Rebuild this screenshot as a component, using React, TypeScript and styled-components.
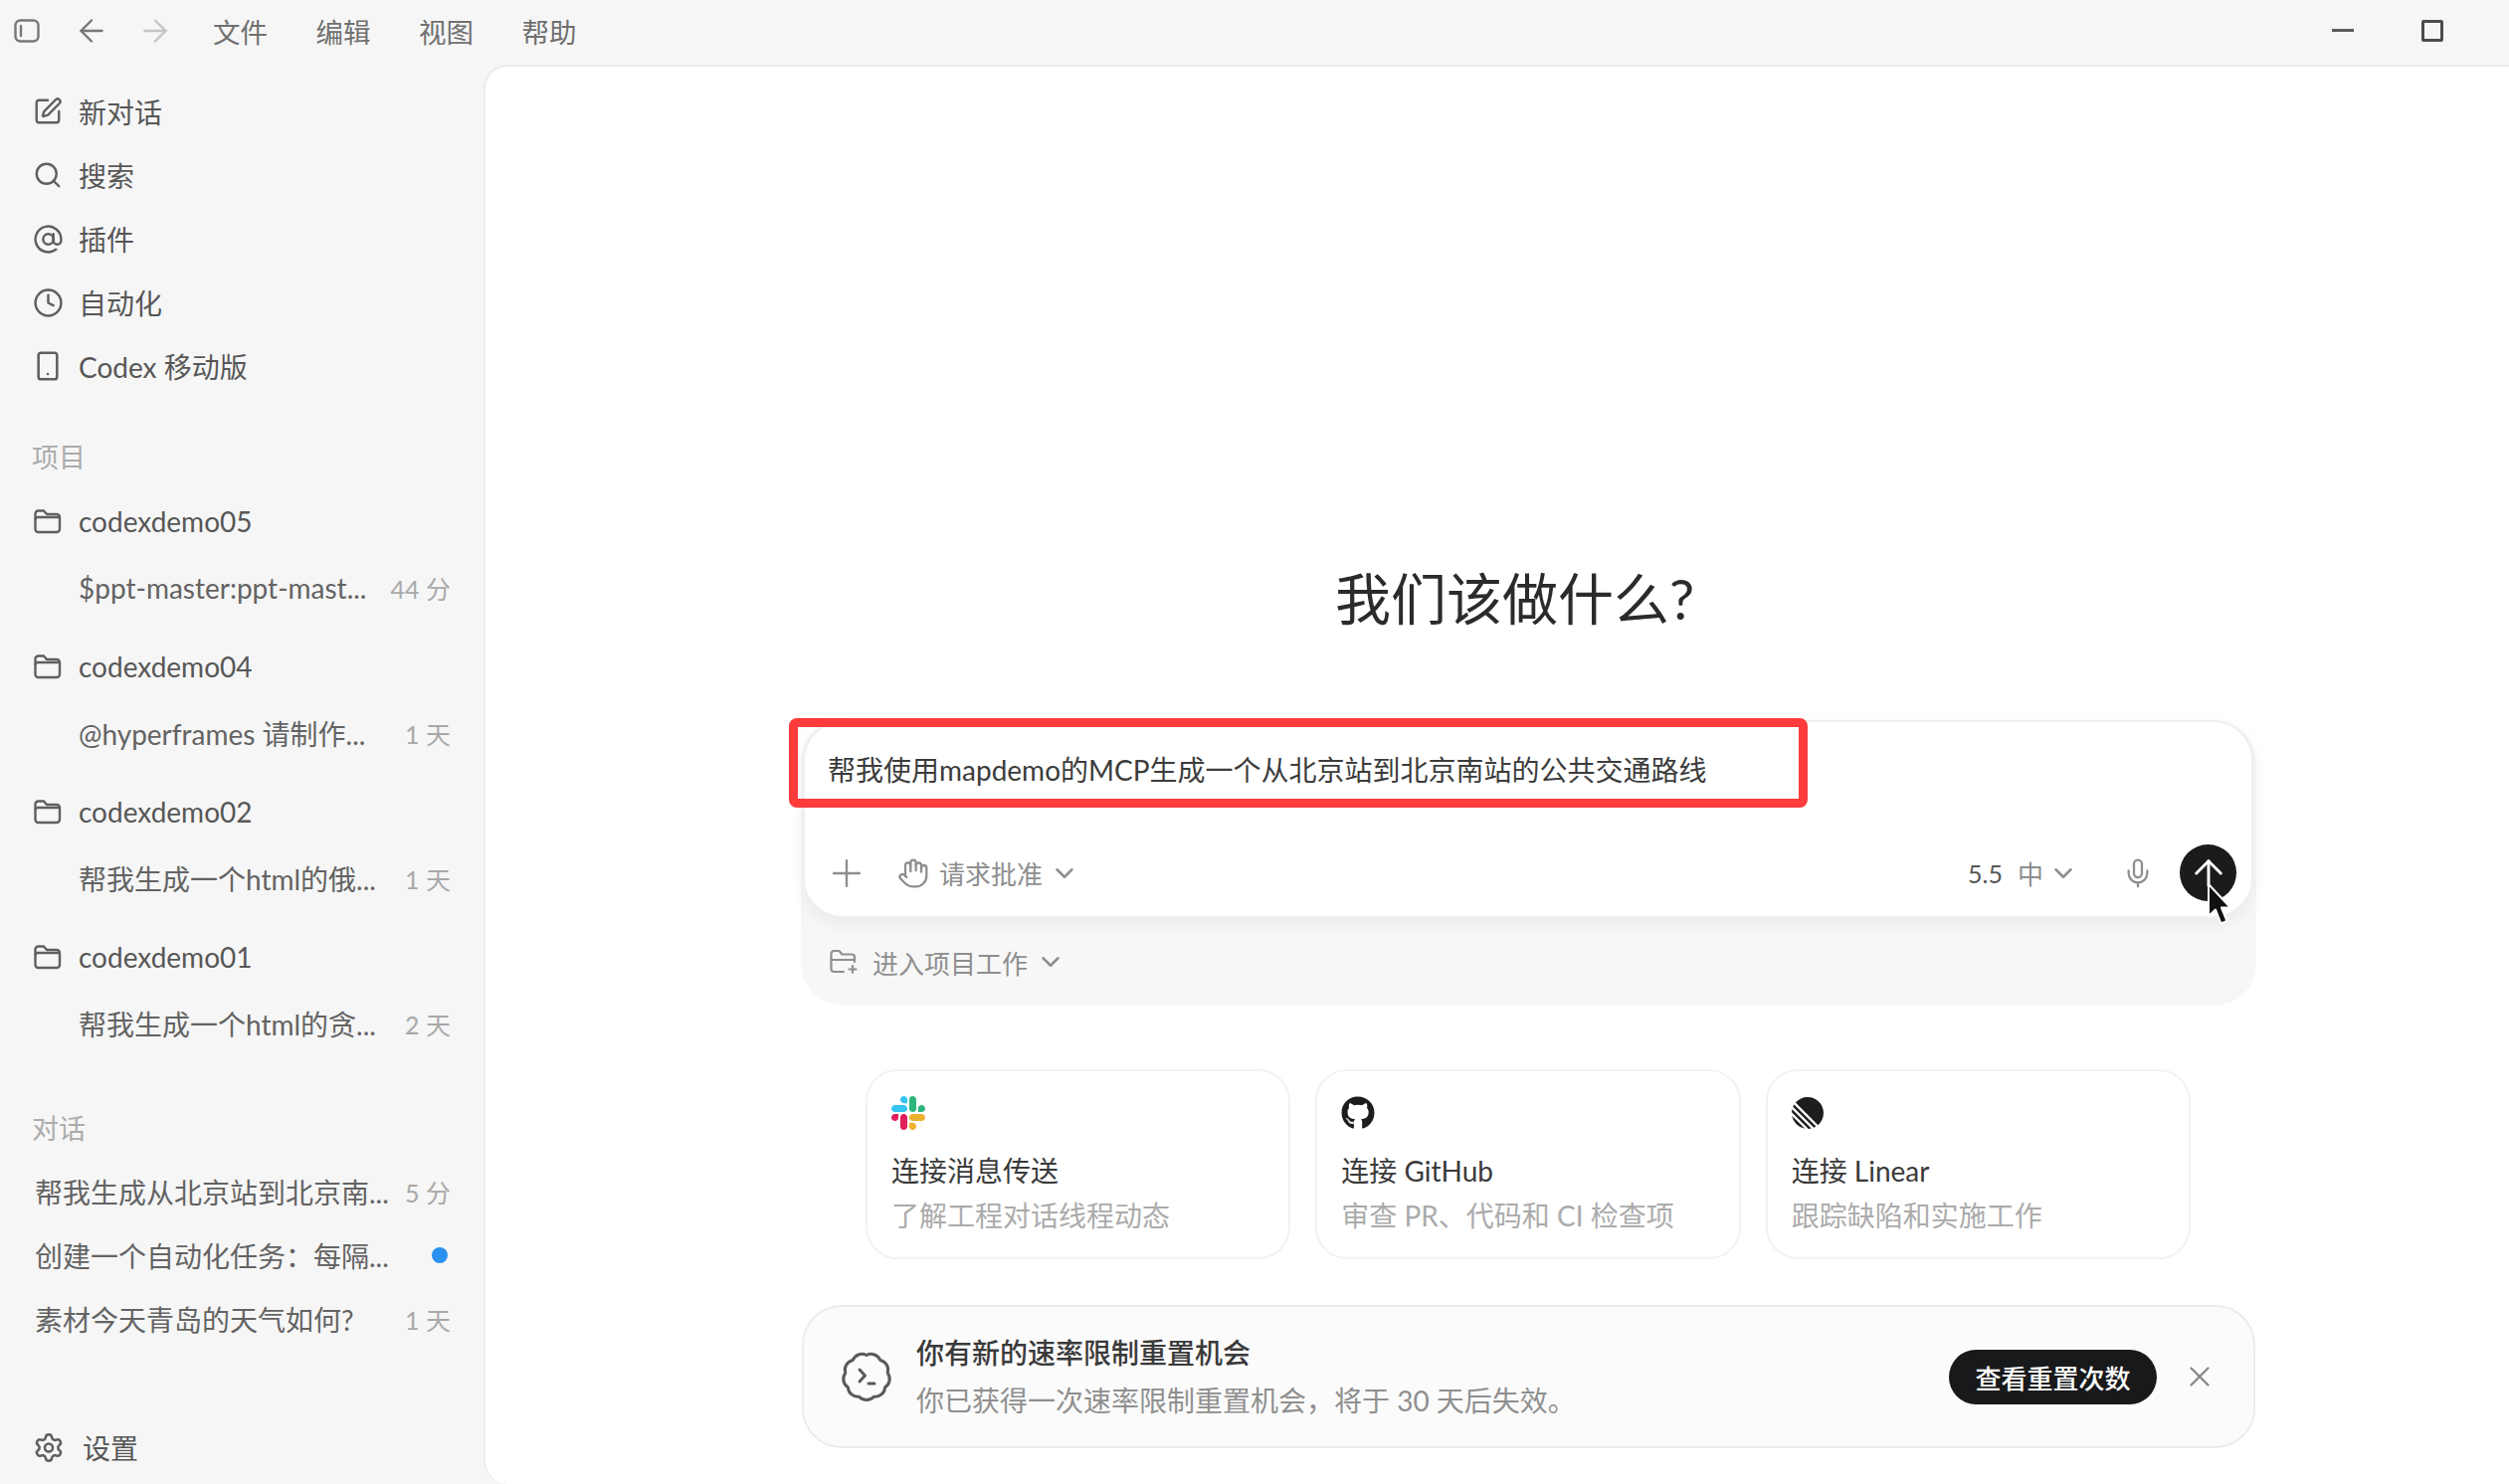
import React, { FC } from 'react';
import styled, { createGlobalStyle } from 'styled-components';
import {
	ArrowLeft,
	ArrowRight,
	ArrowUp,
	AtSign,
	ChevronDown,
	Clock,
	Hand,
	Mic,
	Plus,
	Search,
	Settings,
	Smartphone,
	SquarePen,
	X,
} from 'lucide-react';
import { FaGithub } from 'react-icons/fa';
import { SiLinear } from 'react-icons/si';

const GlobalStyle = createGlobalStyle`
	html, body {
		margin: 0;
		padding: 0;
		height: 100%;
		overflow: hidden;
		background: #f6f6f6;
	}
	body {
		font-family: Lato, "Noto Sans CJK SC", sans-serif;
		color: #555;
	}
`;

const Page = styled.div`
	display: flex;
	flex-direction: column;
	height: 100vh;
`;

const TitleBar = styled.header`
	align-items: center;
	box-sizing: border-box;
	display: flex;
	flex: none;
	height: 65px;
	padding: 0 66px 4px 13px;
`;

const BarIcon = styled.span<{ $faded?: boolean; $gap?: number }>`
	color: ${({ $faded }) => ($faded ? '#c4c4c4' : '#777')};
	display: flex;
	margin-left: ${({ $gap }) => $gap ?? 0}px;
`;

const Menu = styled.nav`
	display: flex;
	font-size: 27.5px;
	gap: 48.5px;
	color: #707070;
	margin-left: 40px;
`;

const WindowControls = styled.div`
	align-items: center;
	display: flex;
	gap: 68px;
	margin-left: auto;
`;

const Minimize = styled.span`
	background: #5c5c5c;
	height: 3px;
	width: 22px;
`;

const Maximize = styled.span`
	border: 3px solid #4c4c4c;
	border-radius: 2px;
	box-sizing: border-box;
	height: 22px;
	width: 22px;
`;

const Body = styled.div`
	display: flex;
	flex: 1;
	min-height: 0;
`;

const Sidebar = styled.aside`
	display: flex;
	flex: none;
	flex-direction: column;
	padding: 15px 0 5px;
	width: 486px;
	box-sizing: border-box;
`;

const NavRow = styled.div`
	align-items: center;
	display: flex;
	font-size: 28px;
	gap: 15px;
	height: 64px;
	padding-left: 32px;
	color: #575757;
`;

const NavIcon = styled.span`
	color: #5f5f5f;
	display: flex;
	justify-content: center;
	width: 32px;
`;

const SectionLabel = styled.div<{ $top: number; $bottom: number }>`
	color: #ababab;
	font-size: 27px;
	line-height: 46px;
	margin: ${({ $top, $bottom }) => `${$top}px 0 ${$bottom}px`};
	padding-left: 32px;
`;

const ProjectGroup = styled.div`
	margin-bottom: 12px;
`;

const FolderRow = styled(NavRow)`
	height: 67px;
`;

const ThreadRow = styled.div<{ $indent: number; $height: number }>`
	align-items: center;
	box-sizing: border-box;
	color: #636363;
	display: flex;
	font-size: 28px;
	height: ${({ $height }) => $height}px;
	justify-content: space-between;
	padding: 0 33px 0 ${({ $indent }) => $indent}px;
	white-space: nowrap;
`;

const TimeLabel = styled.span`
	color: #a8a8a8;
	font-size: 25px;
`;

const UnreadDot = styled.span`
	background: #2b90f0;
	border-radius: 50%;
	height: 16px;
	margin-right: 3px;
	width: 16px;
`;

const SettingsRow = styled(NavRow)`
	gap: 18px;
	margin-top: auto;
	padding-left: 33px;
`;

const Main = styled.main`
	background: #fff;
	border-left: 2px solid #ececec;
	border-top: 2px solid #ececec;
	border-radius: 24px 0 0 24px;
	box-sizing: border-box;
	flex: 1;
	min-width: 0;
	padding: 495px 0 0 317px;
`;

const Column = styled.div`
	width: 1463px;
`;

const Heading = styled.h1`
	color: #2b2b2b;
	font-size: 56px;
	font-weight: 400;
	line-height: 80px;
	margin: 0;
	padding-right: 28px;
	text-align: center;
`;

const Composer = styled.section`
	background: #f7f7f7;
	border-radius: 42px;
	margin-top: 82px;
	padding: 0 3px 0 2px;
`;

const InputCard = styled.div`
	background: #fff;
	border: 2px solid #efefef;
	border-radius: 40px;
	box-shadow: 0 6px 18px rgba(0, 0, 0, 0.06);
	box-sizing: border-box;
	display: flex;
	flex-direction: column;
	height: 199px;
	justify-content: space-between;
	padding: 28px 15px 15px 23px;
	position: relative;
`;

const Highlight = styled.div`
	border: 9px solid #ff3b3b;
	border-radius: 8px;
	box-sizing: border-box;
	height: 90px;
	left: -16px;
	position: absolute;
	top: -4px;
	width: 1024px;
`;

const PromptText = styled.div`
	color: #3c3c3c;
	font-size: 28px;
	line-height: 40px;
	position: relative;
`;

const Toolbar = styled.div`
	align-items: center;
	display: flex;
	height: 57px;
	color: #8e8e8e;
	font-size: 26px;
`;

const ToolIcon = styled.span<{ $left?: number; $right?: number }>`
	display: flex;
	margin-left: ${({ $left }) => $left ?? 0}px;
	margin-right: ${({ $right }) => $right ?? 0}px;
`;

const RightTools = styled.div`
	align-items: center;
	display: flex;
	margin-left: auto;
`;

const ModelName = styled.span`
	color: #555;
	font-size: 25px;
	margin-right: 15px;
`;

const SendButton = styled.button`
	align-items: center;
	background: #1a1b1d;
	border: 0;
	border-radius: 50%;
	color: #fff;
	display: flex;
	height: 57px;
	justify-content: center;
	margin-left: 26px;
	padding: 0;
	position: relative;
	width: 57px;
`;

const Cursor = styled.svg`
	left: 27px;
	position: absolute;
	top: 38px;
`;

const ComposerFooter = styled.div`
	align-items: center;
	color: #8e8e8e;
	display: flex;
	font-size: 26px;
	height: 88px;
	padding-left: 26px;
`;

const ConnectGrid = styled.div`
	display: grid;
	gap: 25px;
	grid-template-columns: repeat(3, 1fr);
	margin: 64px 66px 0 65px;
`;

const ConnectCard = styled.div`
	background: #fff;
	border: 2px solid #f3f3f3;
	border-radius: 32px;
	box-sizing: border-box;
	height: 191px;
	padding: 25px 24px;
`;

const CardIcon = styled.div`
	align-items: center;
	color: #1d1d1f;
	display: flex;
	height: 34px;
`;

const CardTitle = styled.div`
	color: #3a3a3a;
	font-size: 28px;
	line-height: 40px;
	margin-top: 21px;
`;

const CardSub = styled.div`
	color: #ababab;
	font-size: 28px;
	line-height: 40px;
	margin-top: 5px;
`;

const Banner = styled.section`
	align-items: center;
	background: #fbfbfb;
	border: 2px solid #ececec;
	border-radius: 40px;
	box-sizing: border-box;
	display: flex;
	height: 144px;
	margin: 46px 1px 0 1px;
	padding: 0 37px 0 37px;
`;

const BannerText = styled.div`
	margin-left: 24px;
`;

const BannerTitle = styled.div`
	color: #3a3a3a;
	font-size: 28px;
	font-weight: 500;
	line-height: 44px;
`;

const BannerSub = styled.div`
	color: #8f8f8f;
	font-size: 28px;
	line-height: 44px;
	margin-top: 4px;
`;

const ResetButton = styled.button`
	background: #18191b;
	border: 0;
	border-radius: 28px;
	color: #fff;
	font: 500 26px Lato, "Noto Sans CJK SC", sans-serif;
	height: 55px;
	margin-left: auto;
	padding: 0;
	width: 209px;
`;

const CloseIcon = styled.span`
	color: #8a8a8a;
	display: flex;
	margin-left: 26px;
`;

const SidebarToggle: FC = () => (
	<svg width="28" height="28" viewBox="0 0 28 28" fill="none" stroke="currentColor" strokeWidth="2.4">
		<rect x="2.5" y="3.500" width="23" height="21" rx="5" />
		<path d="M8 9v10" strokeLinecap="round" />
	</svg>
);

const FolderIcon: FC = () => (
	<svg width="30" height="26" viewBox="0 0 30 26" fill="none" stroke="currentColor" strokeWidth="2.4" strokeLinejoin="round">
		<path d="M2.500 21V5.500a3 3 0 0 1 3-3h5.500l3 3.500H24a3 3 0 0 1 3 3v12a3 3 0 0 1-3 3H5.500a3 3 0 0 1-3-3z" />
		<path d="M2.500 11.500a2.500 2.500 0 0 1 2.500-2.500h22" />
	</svg>
);

const FolderPlusIcon: FC = () => (
	<svg width="30" height="28" viewBox="0 0 30 28" fill="none" stroke="currentColor" strokeWidth="2.2" strokeLinecap="round" strokeLinejoin="round">
		<path d="M15 24H5.500a3 3 0 0 1-3-3V6a3 3 0 0 1 3-3h5l3 3.500H23a3 3 0 0 1 3 3V14" />
		<path d="M2.500 12h23" />
		<path d="M24 18v7M20.500 21.500h7" />
	</svg>
);

const SlackIcon: FC = () => (
	<svg width="34" height="34" viewBox="0 0 123 123">
		<path fill="#E01E5A" d="M25.800 77.600c0 7.100-5.800 12.900-12.900 12.900S0 84.700 0 77.600s5.800-12.900 12.900-12.900h12.900v12.900z" />
		<path fill="#E01E5A" d="M32.300 77.600c0-7.100 5.800-12.900 12.900-12.900s12.900 5.800 12.900 12.900v32.300c0 7.100-5.800 12.900-12.900 12.900s-12.900-5.800-12.900-12.900V77.600z" />
		<path fill="#36C5F0" d="M45.200 25.800c-7.100 0-12.900-5.800-12.900-12.900S38.100 0 45.200 0s12.900 5.800 12.900 12.900v12.900H45.200z" />
		<path fill="#36C5F0" d="M45.200 32.300c7.100 0 12.900 5.800 12.900 12.900s-5.800 12.900-12.900 12.900H12.900C5.800 58.100 0 52.300 0 45.200s5.800-12.900 12.900-12.900h32.300z" />
		<path fill="#2EB67D" d="M97 45.200c0-7.100 5.800-12.900 12.900-12.900s12.900 5.800 12.900 12.900-5.800 12.900-12.900 12.900H97V45.200z" />
		<path fill="#2EB67D" d="M90.500 45.200c0 7.100-5.800 12.900-12.900 12.900s-12.900-5.800-12.900-12.900V12.900C64.700 5.800 70.500 0 77.600 0s12.900 5.800 12.900 12.900v32.300z" />
		<path fill="#ECB22E" d="M77.600 97c7.100 0 12.900 5.800 12.900 12.900s-5.800 12.900-12.900 12.900-12.900-5.800-12.900-12.900V97h12.900z" />
		<path fill="#ECB22E" d="M77.600 90.500c-7.100 0-12.900-5.800-12.900-12.900s5.800-12.900 12.900-12.900h32.300c7.100 0 12.900 5.800 12.900 12.900s-5.800 12.900-12.900 12.900H77.600z" />
	</svg>
);

// wavy ring around the prompt glyph
const scallop = (lobes: number, radius: number, arc: number) => {
	const pts = Array.from({ length: lobes }, (_, i) => {
		const a = (i / lobes) * Math.PI * 2 - Math.PI / 2;
		return [26 + radius * Math.cos(a), 26 + radius * Math.sin(a)];
	});
	const segs = pts.slice(1).concat([pts[0]]).map(p => `A${arc} ${arc} 0 0 1 ${p[0].toFixed(1)} ${p[1].toFixed(1)}`);
	return `M${pts[0][0].toFixed(1)} ${pts[0][1].toFixed(1)}${segs.join('')}z`;
};

const CodexBadge: FC = () => (
	<svg width="52" height="52" viewBox="0 0 52 52" fill="none" stroke="#5a5a5a" strokeWidth="3" strokeLinecap="round" strokeLinejoin="round">
		<path d={scallop(9, 21.5, 10)} />
		<path d="M19 19l5.500 6-5.500 6M28 33h6" />
	</svg>
);

const nav = [
	{ label: '新对话', icon: <SquarePen size={30} strokeWidth={1.9} /> },
	{ label: '搜索', icon: <Search size={30} strokeWidth={1.9} /> },
	{ label: '插件', icon: <AtSign size={31} strokeWidth={1.9} /> },
	{ label: '自动化', icon: <Clock size={31} strokeWidth={1.9} /> },
	{ label: 'Codex 移动版', icon: <Smartphone size={32} strokeWidth={1.9} /> },
];

const projects = [
	{ name: 'codexdemo05', thread: '$ppt-master:ppt-mast...', time: '44 分' },
	{ name: 'codexdemo04', thread: '@hyperframes 请制作...', time: '1 天' },
	{ name: 'codexdemo02', thread: '帮我生成一个html的俄...', time: '1 天' },
	{ name: 'codexdemo01', thread: '帮我生成一个html的贪...', time: '2 天' },
];

const connectors = [
	{ title: '连接消息传送', sub: '了解工程对话线程动态', icon: <SlackIcon /> },
	{ title: '连接 GitHub', sub: '审查 PR、代码和 CI 检查项', icon: <FaGithub size={34} /> },
	{ title: '连接 Linear', sub: '跟踪缺陷和实施工作', icon: <SiLinear size={32} /> },
];

const App: FC = () => (
	<Page>
		<GlobalStyle />
		<TitleBar>
			<BarIcon>
				<SidebarToggle />
			</BarIcon>
			<BarIcon $gap={33}>
				<ArrowLeft size={36} strokeWidth={1.6} />
			</BarIcon>
			<BarIcon $gap={28} $faded>
				<ArrowRight size={36} strokeWidth={1.6} />
			</BarIcon>
			<Menu>
				<span>文件</span>
				<span>编辑</span>
				<span>视图</span>
				<span>帮助</span>
			</Menu>
			<WindowControls>
				<Minimize />
				<Maximize />
			</WindowControls>
		</TitleBar>
		<Body>
			<Sidebar>
				{nav.map(item => (
					<NavRow key={item.label}>
						<NavIcon>{item.icon}</NavIcon>
						{item.label}
					</NavRow>
				))}
				<SectionLabel $top={37} $bottom={7}>
					项目
				</SectionLabel>
				{projects.map(project => (
					<ProjectGroup key={project.name}>
						<FolderRow>
							<NavIcon>
								<FolderIcon />
							</NavIcon>
							{project.name}
						</FolderRow>
						<ThreadRow $indent={79} $height={67}>
							<span>{project.thread}</span>
							<TimeLabel>{project.time}</TimeLabel>
						</ThreadRow>
					</ProjectGroup>
				))}
				<SectionLabel $top={38} $bottom={8}>
					对话
				</SectionLabel>
				<ThreadRow $indent={35} $height={64}>
					<span>帮我生成从北京站到北京南...</span>
					<TimeLabel>5 分</TimeLabel>
				</ThreadRow>
				<ThreadRow $indent={35} $height={64}>
					<span>创建一个自动化任务：每隔...</span>
					<UnreadDot />
				</ThreadRow>
				<ThreadRow $indent={35} $height={64}>
					<span>素材今天青岛的天气如何?</span>
					<TimeLabel>1 天</TimeLabel>
				</ThreadRow>
				<SettingsRow>
					<NavIcon>
						<Settings size={33} strokeWidth={1.9} />
					</NavIcon>
					设置
				</SettingsRow>
			</Sidebar>
			<Main>
				<Column>
					<Heading>我们该做什么?</Heading>
					<Composer>
						<InputCard>
							<PromptText>帮我使用mapdemo的MCP生成一个从北京站到北京南站的公共交通路线</PromptText>
							<Highlight />
							<Toolbar>
								<ToolIcon $left={-3}>
									<Plus size={44} strokeWidth={1.3} />
								</ToolIcon>
								<ToolIcon $left={29} $right={10}>
									<Hand size={32} strokeWidth={1.7} />
								</ToolIcon>
								请求批准
								<ToolIcon $left={7}>
									<ChevronDown size={30} strokeWidth={2} />
								</ToolIcon>
								<RightTools>
									<ModelName>5.5</ModelName>
									中
									<ToolIcon $left={5}>
										<ChevronDown size={30} strokeWidth={2} />
									</ToolIcon>
									<ToolIcon $left={44}>
										<Mic size={32} strokeWidth={1.7} />
									</ToolIcon>
									<SendButton>
										<ArrowUp size={42} strokeWidth={1.7} />
										<Cursor width="26" height="44" viewBox="0 0 26 44">
											<path d="M2 2v32l7-6.500 5.500 14 6-2.500-5.500-13.500h9z" fill="#111" stroke="#fff" strokeWidth="2" strokeLinejoin="round" />
										</Cursor>
									</SendButton>
								</RightTools>
							</Toolbar>
						</InputCard>
						<ComposerFooter>
							<ToolIcon $right={14}>
								<FolderPlusIcon />
							</ToolIcon>
							进入项目工作
							<ToolIcon $left={8}>
								<ChevronDown size={30} strokeWidth={2} />
							</ToolIcon>
						</ComposerFooter>
					</Composer>
					<ConnectGrid>
						{connectors.map(card => (
							<ConnectCard key={card.title}>
								<CardIcon>{card.icon}</CardIcon>
								<CardTitle>{card.title}</CardTitle>
								<CardSub>{card.sub}</CardSub>
							</ConnectCard>
						))}
					</ConnectGrid>
					<Banner>
						<CodexBadge />
						<BannerText>
							<BannerTitle>你有新的速率限制重置机会</BannerTitle>
							<BannerSub>你已获得一次速率限制重置机会，将于 30 天后失效。</BannerSub>
						</BannerText>
						<ResetButton>查看重置次数</ResetButton>
						<CloseIcon>
							<X size={34} strokeWidth={1.7} />
						</CloseIcon>
					</Banner>
				</Column>
			</Main>
		</Body>
	</Page>
);

export default App;
